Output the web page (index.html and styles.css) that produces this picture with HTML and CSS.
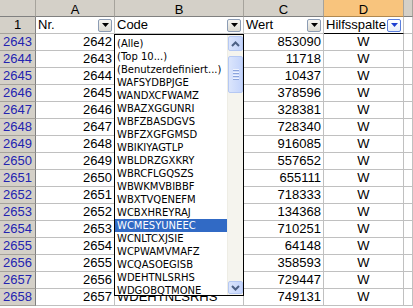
FILE: index.html
```html
<!DOCTYPE html>
<html lang="de">

<head>
    <meta charset="UTF-8">
    <title>Autofilter</title>
    <link rel="stylesheet" href="styles.css">
</head>

<body>
    <div class="sheet">
        <div class="grid">
            <div class="corner"></div>
            <div class="col-head">A</div>
            <div class="col-head">B</div>
            <div class="col-head">C</div>
            <div class="col-head active">D</div>
            <div class="col-head"></div>

            <div class="row-head first">1</div>
            <div class="cell head"><span>Nr.</span><span class="drop"><svg width="7" height="4" viewBox="0 0 7 4"><path d="M0 0h7L3.5 4z"/></svg></span></div>
            <div class="cell head"><span>Code</span><span class="drop"><svg width="7" height="4" viewBox="0 0 7 4"><path d="M0 0h7L3.5 4z"/></svg></span></div>
            <div class="cell head"><span>Wert</span><span class="drop"><svg width="7" height="4" viewBox="0 0 7 4"><path d="M0 0h7L3.5 4z"/></svg></span></div>
            <div class="cell head current"><span>Hilfsspalte</span><span class="drop on"><svg width="7" height="4" viewBox="0 0 7 4"><path d="M0 0h7L3.5 4z"/></svg></span></div>
            <div class="cell"></div>

            <!-- column B is covered by the open list, only the last row peeks out -->
            <div class="row-head">2643</div><div class="cell num">2642</div><div class="cell"></div><div class="cell num">853090</div><div class="cell mid">W</div><div class="cell"></div>
            <div class="row-head">2644</div><div class="cell num">2643</div><div class="cell"></div><div class="cell num">11718</div><div class="cell mid">W</div><div class="cell"></div>
            <div class="row-head">2645</div><div class="cell num">2644</div><div class="cell"></div><div class="cell num">10437</div><div class="cell mid">W</div><div class="cell"></div>
            <div class="row-head">2646</div><div class="cell num">2645</div><div class="cell"></div><div class="cell num">378596</div><div class="cell mid">W</div><div class="cell"></div>
            <div class="row-head">2647</div><div class="cell num">2646</div><div class="cell"></div><div class="cell num">328381</div><div class="cell mid">W</div><div class="cell"></div>
            <div class="row-head">2648</div><div class="cell num">2647</div><div class="cell"></div><div class="cell num">728340</div><div class="cell mid">W</div><div class="cell"></div>
            <div class="row-head">2649</div><div class="cell num">2648</div><div class="cell"></div><div class="cell num">916085</div><div class="cell mid">W</div><div class="cell"></div>
            <div class="row-head">2650</div><div class="cell num">2649</div><div class="cell"></div><div class="cell num">557652</div><div class="cell mid">W</div><div class="cell"></div>
            <div class="row-head">2651</div><div class="cell num">2650</div><div class="cell"></div><div class="cell num">655111</div><div class="cell mid">W</div><div class="cell"></div>
            <div class="row-head">2652</div><div class="cell num">2651</div><div class="cell"></div><div class="cell num">718333</div><div class="cell mid">W</div><div class="cell"></div>
            <div class="row-head">2653</div><div class="cell num">2652</div><div class="cell"></div><div class="cell num">134368</div><div class="cell mid">W</div><div class="cell"></div>
            <div class="row-head">2654</div><div class="cell num">2653</div><div class="cell"></div><div class="cell num">710251</div><div class="cell mid">W</div><div class="cell"></div>
            <div class="row-head">2655</div><div class="cell num">2654</div><div class="cell"></div><div class="cell num">64148</div><div class="cell mid">W</div><div class="cell"></div>
            <div class="row-head">2656</div><div class="cell num">2655</div><div class="cell"></div><div class="cell num">358593</div><div class="cell mid">W</div><div class="cell"></div>
            <div class="row-head">2657</div><div class="cell num">2656</div><div class="cell"></div><div class="cell num">729447</div><div class="cell mid">W</div><div class="cell"></div>
            <div class="row-head">2658</div><div class="cell num">2657</div><div class="cell">WDEHTNLSRHS</div><div class="cell num">749131</div><div class="cell mid">W</div><div class="cell"></div>
        </div>

        <!-- open autofilter list of column B -->
        <div class="filter-list">
            <ul class="items">
                <li>(Alle)</li>
                <li>(Top 10...)</li>
                <li>(Benutzerdefiniert...)</li>
                <li>WAFSYDBPJGE</li>
                <li>WANDXCFWAMZ</li>
                <li>WBAZXGGUNRI</li>
                <li>WBFZBASDGVS</li>
                <li>WBFZXGFGMSD</li>
                <li>WBIKIYAGTLP</li>
                <li>WBLDRZGXKRY</li>
                <li>WBRCFLGQSZS</li>
                <li>WBWKMVBIBBF</li>
                <li>WBXTVQENEFM</li>
                <li>WCBXHREYRAJ</li>
                <li class="selected">WCMESYUNEEC</li>
                <li>WCNLTCXJSIE</li>
                <li>WCPWAMVMAFZ</li>
                <li>WCQASOEGISB</li>
                <li>WDEHTNLSRHS</li>
                <li>WDGOBQTMONE</li>
            </ul>
            <div class="scrollbar">
                <div class="sb-btn"><svg width="9" height="6" viewBox="0 0 9 6"><path d="M1 5l3.5-3.5L8 5" /></svg></div>
                <div class="sb-thumb"><span></span><span></span><span></span><span></span></div>
                <div class="sb-track"></div>
                <div class="sb-btn down"><svg width="9" height="6" viewBox="0 0 9 6"><path d="M1 1l3.5 3.5L8 1" /></svg></div>
            </div>
        </div>
    </div>
</body>

</html>
```

FILE: styles.css
```css
body {
    margin: 0;
    background: #ffffff;
    font-family: 'Liberation Sans', Arial, sans-serif;
    font-size: 13px;
    color: #000000;
    overflow: hidden;
}

.sheet {
    position: relative;
    width: 413px;
    height: 308px;
    overflow: hidden;
}

.grid {
    display: grid;
    grid-template-columns: 36px 79px 129px 80px 80px 1fr;
    grid-template-rows: 17px repeat(17, 17px);
}

.grid > div {
    box-sizing: border-box;
    border-right: 1px solid #c0c0c0;
    border-bottom: 1px solid #c0c0c0;
    line-height: 16px;
    white-space: nowrap;
    overflow: hidden;
}

.grid > .corner,
.grid > .col-head {
    background: #d4d0c8;
    border-right: 1px solid #a6a39c;
    border-bottom: 1px solid #808080;
}

.col-head {
    text-align: center;
    padding-top: 2px;
    line-height: 15px;
}

.grid > .col-head.active {
    background: #f8c47d;
    border-bottom-color: #b08850;
}

.grid > .row-head {
    background: #d4d0c8;
    border-right: 1px solid #808080;
    border-bottom: 1px solid #a6a39c;
    text-align: center;
    color: #2424b0;
}

.grid > .row-head.first {
    color: #000000;
}

.cell {
    padding: 0 2px;
}

.num {
    text-align: right;
}

.mid {
    text-align: center;
}

.grid > .head {
    display: flex;
    align-items: center;
    justify-content: space-between;
    padding-right: 2px;
}

.grid > .current {
    border-bottom: 1px solid #000000;
}

.drop {
    display: flex;
    align-items: center;
    justify-content: center;
    box-sizing: border-box;
    width: 14px;
    height: 13px;
    flex-shrink: 0;
    border: 1px solid #8c9cb4;
    border-radius: 2px;
    background: linear-gradient(#f6f5f1, #dcdad2);
}

.drop svg {
    fill: #000000;
}

.drop.on {
    border-color: #5a7edc;
    background: linear-gradient(#ffffff, #e8eef8);
}

.drop.on svg {
    fill: #1c3fd0;
}

.filter-list {
    position: absolute;
    left: 114px;
    top: 34px;
    width: 130px;
    height: 262px;
    box-sizing: border-box;
    border: 1px solid #000000;
    background: #ffffff;
    display: flex;
    overflow: hidden;
}

.items {
    flex: 1;
    margin: 0;
    padding: 2px 0 0;
    list-style: none;
    font-family: 'DejaVu Sans', Tahoma, sans-serif;
    font-size: 10px;
}

.items li {
    height: 13px;
    line-height: 13px;
    padding-left: 2px;
    white-space: nowrap;
}

.items li.selected {
    background: #316ac5;
    color: #ffffff;
}

.scrollbar {
    width: 15px;
    display: flex;
    flex-direction: column;
    padding: 1px 0;
    background: #f5f4ee;
    border-left: 1px solid #eeede5;
}

.sb-btn,
.sb-thumb {
    box-sizing: border-box;
    border: 1px solid #b5c8f3;
    border-radius: 2px;
    background: linear-gradient(90deg, #dbe5fc, #c4d4fb);
}

.sb-btn {
    height: 15px;
    display: flex;
    align-items: center;
    justify-content: center;
}

.sb-btn.down {
    height: 13px;
}

.sb-btn svg {
    fill: none;
    stroke: #4d6185;
    stroke-width: 2;
}

.sb-thumb {
    height: 37px;
    margin-top: 5px;
    display: flex;
    flex-direction: column;
    align-items: center;
    justify-content: center;
    gap: 1px;
}

.sb-thumb span {
    width: 6px;
    height: 1px;
    background: #eef3fe;
    border-bottom: 1px solid #8ca4dc;
}

.sb-track {
    flex: 1;
}
```
